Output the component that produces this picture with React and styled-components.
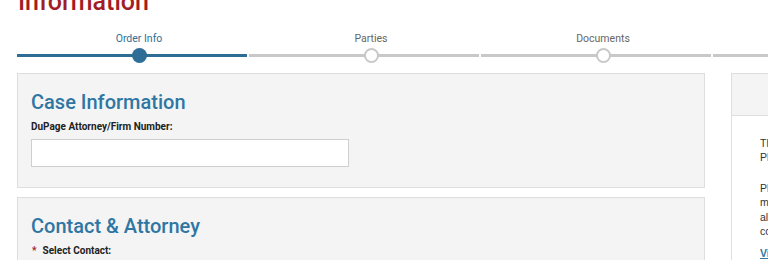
import React from "react";
import styled, { createGlobalStyle } from "styled-components";

const GlobalStyle = createGlobalStyle`
  html, body {
    margin: 0;
    padding: 0;
    background: #fff;
    overflow: hidden;
  }
  body {
    font-family: "Liberation Sans", Arial, sans-serif;
    color: #333;
  }
`;

const steps = ["Order Info", "Parties", "Documents", "Review"];

const App = () => {
  return (
    <>
      <GlobalStyle />
      <Page>
        <Title>Information</Title>
        <Stepper>
          {steps.map((label, i) => (
            <Step key={label}>
              <StepLabel active={i === 0}>{label}</StepLabel>
              <Track active={i === 0}>
                <Dot active={i === 0} />
              </Track>
            </Step>
          ))}
        </Stepper>
        <Content>
          <Main>
            <Panel>
              <Heading>Case Information</Heading>
              <FieldLabel>DuPage Attorney/Firm Number:</FieldLabel>
              <TextInput type="text" />
            </Panel>
            <Panel>
              <Heading>Contact &amp; Attorney</Heading>
              <FieldLabel>
                <Required>*</Required>Select Contact:
              </FieldLabel>
            </Panel>
          </Main>
          <Side>
            <SideHeader>Help</SideHeader>
            <SideBody>
              <SideText>
                The following fields are required for e-filing.
                <br />
                Please fill in all fields marked with an asterisk.
              </SideText>
              <SideText spacing={8}>
                Please note: the Attorney/Firm Number
                <br />
                must match the number on file with the
                <br />
                all filings submitted through this
                <br />
                court's e-filing system.
              </SideText>
              <HelpLink href="#">View Help</HelpLink>
            </SideBody>
          </Side>
        </Content>
      </Page>
    </>
  );
};

export default App;

// Styled Components
const Page = styled.div`
  width: 768px;
  height: 260px;
  padding-left: 17px;
  box-sizing: border-box;
  overflow: hidden;
`;

const Title = styled.h1`
  margin: -10px 0 0 1px;
  font-family: Roboto, "Liberation Sans", sans-serif;
  font-weight: 500;
  font-size: 25px;
  line-height: 24px;
  color: #a31c25;
`;

const Stepper = styled.div`
  display: flex;
  gap: 2px;
  margin-top: 19px;
  width: 1000px;
`;

const Step = styled.div`
  width: 230px;
  flex: none;
  display: flex;
  flex-direction: column;
`;

const StepLabel = styled.div`
  width: 244px;
  text-align: center;
  font-family: Roboto, "Liberation Sans", sans-serif;
  font-size: 10.5px;
  line-height: 12px;
  color: ${({ active }) => (active ? "#2f6f98" : "#666")};
`;

const Track = styled.div`
  position: relative;
  margin-top: 9px;
  height: 3px;
  background: ${({ active }) => (active ? "#2e6d96" : "#c8c8c8")};
`;

const Dot = styled.span`
  position: absolute;
  left: 115px;
  top: -6px;
  width: 15px;
  height: 15px;
  box-sizing: border-box;
  border-radius: 50%;
  background: ${({ active }) => (active ? "#2e6d96" : "#fff")};
  border: ${({ active }) => (active ? "none" : "2.5px solid #c8c8c8")};
`;

const Content = styled.div`
  display: flex;
  gap: 26px;
  margin-top: 16px;
`;

const Main = styled.div`
  width: 688px;
  flex: none;
  display: flex;
  flex-direction: column;
  gap: 9px;
`;

const Panel = styled.section`
  background: #f4f4f4;
  border: 1px solid #dedede;
  padding: 16px 13px 20px;
`;

const Heading = styled.h2`
  margin: 0 0 7px;
  font-family: Roboto, "Liberation Sans", sans-serif;
  font-weight: 500;
  font-size: 20px;
  line-height: 24px;
  color: #2f76a3;
`;

const FieldLabel = styled.label`
  display: block;
  font-family: Roboto, "Liberation Sans", sans-serif;
  font-weight: 700;
  font-size: 10px;
  line-height: 12px;
  color: #222;
  margin-bottom: 6px;
`;

const Required = styled.span`
  color: #a31c25;
  margin: 0 6px 0 1px;
`;

const TextInput = styled.input`
  display: block;
  width: 318px;
  height: 28px;
  box-sizing: border-box;
  border: 1px solid #cfcfcf;
  background: #fff;
  margin: 0;
`;

const Side = styled.aside`
  width: 260px;
  flex: none;
  border: 1px solid #dedede;
  background: #fff;
`;

const SideHeader = styled.div`
  height: 41px;
  background: #f4f4f4;
  border-bottom: 1px solid #dedede;
  color: transparent;
`;

const SideBody = styled.div`
  padding: 20px 28px;
`;

const SideText = styled.p`
  margin: 0 0 ${({ spacing }) => spacing ?? 16}px;
  font-size: 10.5px;
  line-height: 14.4px;
  white-space: nowrap;
  color: #333;
`;

const HelpLink = styled.a`
  display: block;
  font-size: 10.5px;
  line-height: 14px;
  font-weight: 700;
  color: #2f76a3;
  text-decoration: underline;
`;
